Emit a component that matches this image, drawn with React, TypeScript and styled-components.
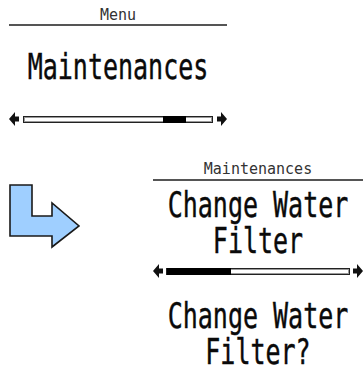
import React from 'react';
import styled, { createGlobalStyle } from 'styled-components';

const GlobalStyle = createGlobalStyle`
  body {
    margin: 0;
    background: #fff;
    font-family: 'DejaVu Sans Mono', 'Liberation Mono', monospace;
  }
`;

const Page = styled.div`
  width: 363px;
  height: 372px;
  overflow: hidden;
  display: flex;
  flex-direction: column;
`;

const MenuPanel = styled.div`
  margin-left: 9px;
  width: 218px;
`;

const Title = styled.div<{ h: number; pad?: number }>`
  height: ${(p) => p.h}px;
  padding-top: ${(p) => p.pad || 0}px;
  box-sizing: border-box;
  display: flex;
  align-items: center;
  justify-content: center;
  border-bottom: 2px solid #555;
  font-size: 15px;
  color: #333;
  line-height: 1;
`;

// pixel-font look: mono glyphs stretched vertically, lines 36px apart
const BigText = styled.div<{ lines: number; mt?: number }>`
  height: ${(p) => p.lines * 36}px;
  margin-top: ${(p) => p.mt || 0}px;
  display: flex;
  align-items: center;
  justify-content: center;
  font-size: 25px;
  color: #0a0a0a;
  text-align: center;
  white-space: pre;

  span {
    display: inline-block;
    line-height: 24.8px;
    transform: scaleY(1.45);
    -webkit-text-stroke: 0.3px #0a0a0a;
  }
`;

const BarRow = styled.div<{ mt: number }>`
  display: flex;
  align-items: center;
  height: 14px;
  margin-top: ${(p) => p.mt}px;
`;

const Track = styled.div<{ gap: number }>`
  position: relative;
  flex: 1;
  height: 5px;
  margin: 0 ${(p) => p.gap}px;
  border: 1px solid #222;
  background: #fff;
  box-shadow: inset 0 0 0 1px #999;
`;

const Thumb = styled.div`
  position: absolute;
  top: -1px;
  bottom: -1px;
  background: #000;
`;

const BottomRow = styled.div`
  display: grid;
  grid-template-columns: 153px 1fr;
  margin-top: 33px;
`;

const ArrowCell = styled.div`
  padding: 25px 0 0 9px;
`;

const RightCol = styled.div`
  display: flex;
  flex-direction: column;
`;

function Arrow({ flip }: { flip?: boolean }) {
  return (
    <svg width="10" height="14" viewBox="0 0 10 14" style={flip ? { transform: 'scaleX(-1)' } : undefined}>
      <path d="M0 7 L6 0 L6 4.5 L10 4.5 L10 9.5 L6 9.5 L6 14 Z" fill="#111" />
    </svg>
  );
}

function ScrollBar({ mt, left, width, gap }: { mt: number; left: number; width: number; gap: number }) {
  return (
    <BarRow mt={mt}>
      <Arrow />
      <Track gap={gap}>
        <Thumb style={{ left: `${left}%`, width: `${width}%` }} />
      </Track>
      <Arrow flip />
    </BarRow>
  );
}

export default function App() {
  return (
    <Page>
      <GlobalStyle />
      <MenuPanel>
        <Title h={26} pad={6}>Menu</Title>
        <BigText lines={1} mt={24}>
          <span>Maintenances</span>
        </BigText>
        <ScrollBar mt={26} left={73.7} width={12.6} gap={4} />
      </MenuPanel>
      <BottomRow>
        <ArrowCell>
          <svg width="72" height="66" viewBox="0 0 72 66">
            <polygon
              points="1,1 23,1 23,32 43,32 43,19 70,42 43,63 43,52 1,52"
              fill="#9fcfff"
              stroke="#1a1a1a"
              strokeWidth="1.6"
              strokeLinejoin="miter"
            />
          </svg>
        </ArrowCell>
        <RightCol>
          <Title h={22}>Maintenances</Title>
          <BigText lines={2} mt={7}>
            <span>{'Change Water\nFilter'}</span>
          </BigText>
          <ScrollBar mt={4} left={0} width={35} gap={3} />
          <BigText lines={2} mt={21}>
            <span>{'Change Water\nFilter?'}</span>
          </BigText>
        </RightCol>
      </BottomRow>
    </Page>
  );
}
